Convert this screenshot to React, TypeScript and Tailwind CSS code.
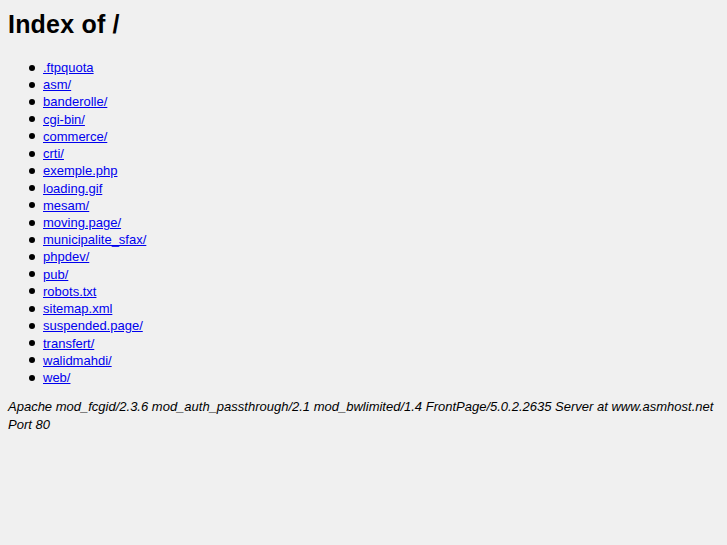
import React from "react";

const items = [
  ".ftpquota",
  "asm/",
  "banderolle/",
  "cgi-bin/",
  "commerce/",
  "crti/",
  "exemple.php",
  "loading.gif",
  "mesam/",
  "moving.page/",
  "municipalite_sfax/",
  "phpdev/",
  "pub/",
  "robots.txt",
  "sitemap.xml",
  "suspended.page/",
  "transfert/",
  "walidmahdi/",
  "web/",
];

export default function App() {
  return (
    <div
      className="min-h-[545px] w-full bg-[#f0f0f0] px-2 py-[1px] text-black"
      style={{ fontFamily: '"Liberation Sans", Arial, sans-serif' }}
    >
      <h1 className="mt-[8px] mb-0 text-[25px] font-bold leading-[30px] tracking-[0.2px]">Index of /</h1>
      <ul className="mt-[20px] pl-[21px] text-[13px] leading-[17.22px]">
        {items.map((it) => (
          <li key={it} className="flex items-center">
            <span className="mr-[8px] h-[6px] w-[6px] rounded-full bg-black" />
            <a href="#" className="text-[#0000ee] underline">
              {it}
            </a>
          </li>
        ))}
      </ul>
      <address className="mt-[12px] text-[13px] italic leading-[18px]">
        Apache mod_fcgid/2.3.6 mod_auth_passthrough/2.1 mod_bwlimited/1.4 FrontPage/5.0.2.2635 Server at www.asmhost.net Port 80
      </address>
    </div>
  );
}
